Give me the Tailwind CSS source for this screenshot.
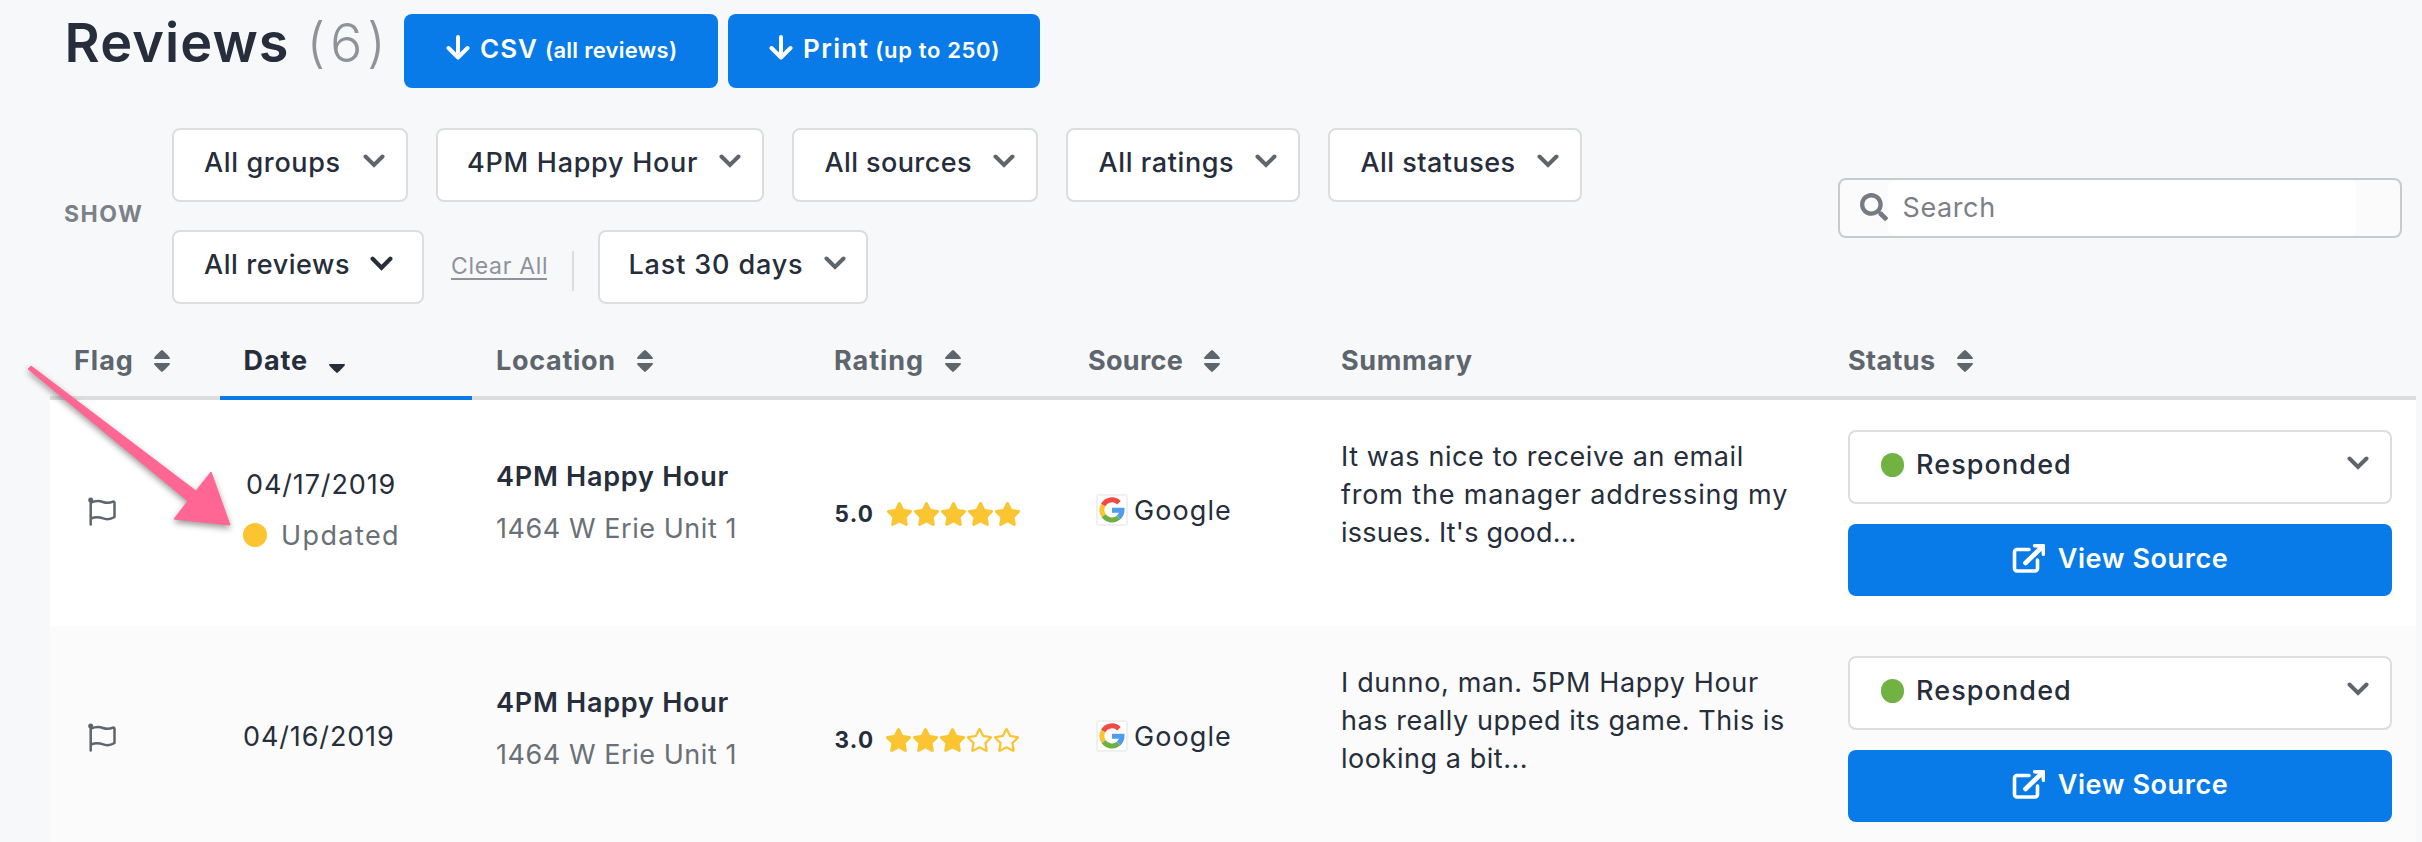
<!DOCTYPE html>
<html lang="en">
<head>
<meta charset="utf-8">
<title>Reviews</title>
<script src="https://cdn.jsdelivr.net/npm/@tailwindcss/browser@4"></script>
</head>
<body class="relative w-[2422px] h-[842px] overflow-hidden bg-[#f7f8fa] font-[Inter,sans-serif] text-[27px] text-[#262d3b] whitespace-nowrap">
<svg class="hidden">
  <symbol id="chev" viewBox="0 0 22 14"><path d="M2.5 2.5 11 11l8.500-8.500" fill="none" stroke="currentColor" stroke-width="4" stroke-linecap="round"/></symbol>
  <symbol id="down" viewBox="0 0 24 26"><path d="M12 2v20M2.500 13 12 22.500 21.500 13" fill="none" stroke="currentColor" stroke-width="4" stroke-linecap="round" stroke-linejoin="round"/></symbol>
  <symbol id="sort" viewBox="0 0 16 22"><path d="M8 0c.6 0 8 7 8 8.200 0 .5-.4.800-1 .8H1c-.6 0-1-.3-1-.8C0 7 7.400 0 8 0zM8 22c.6 0 8-7 8-8.200 0-.5-.4-.8-1-.8H1c-.6 0-1 .3-1 .8C0 15 7.400 22 8 22z" fill="currentColor"/></symbol>
  <symbol id="star" viewBox="0 0 576 512"><path fill="currentColor" d="M259.300 17.800L194 150.200 47.900 171.500c-26.200 3.800-36.700 36.100-17.700 54.600l105.700 103-25 145.500c-4.500 26.300 23.200 46 46.400 33.700L288 439.600l130.700 68.700c23.200 12.200 50.900-7.400 46.400-33.700l-25-145.500 105.700-103c19-18.500 8.500-50.800-17.700-54.600L382 150.200 316.700 17.800c-11.700-23.600-45.600-23.900-57.400 0z"/></symbol>
  <symbol id="star-o" viewBox="0 0 576 512"><path fill="currentColor" d="M528.100 171.500L382 150.200 316.700 17.800c-11.700-23.600-45.600-23.900-57.400 0L194 150.200 47.900 171.500c-26.200 3.800-36.700 36.100-17.700 54.600l105.700 103-25 145.500c-4.500 26.300 23.200 46 46.400 33.700L288 439.600l130.700 68.700c23.200 12.200 50.900-7.400 46.400-33.700l-25-145.500 105.700-103c19-18.500 8.500-50.800-17.700-54.600zM388.600 312.300l23.700 138.400L288 385.400l-124.300 65.300 23.700-138.400-100.600-98 139-20.200 62.200-126 62.200 126 139 20.200-100.600 98z"/></symbol>
  <symbol id="flag" viewBox="0 0 28 30"><circle cx="2.700" cy="3" r="2.500" fill="currentColor"/><path d="M2.700 3v24.500M3 5.500C8 3.500 11 3.500 15 5s7 1 10-.3c.8-.3 1.500 0 1.500 1V20c-4 2.500-8 2.800-12 1.200s-8-1.200-11.500.3" fill="none" stroke="currentColor" stroke-width="2.500" stroke-linecap="round" stroke-linejoin="round"/></symbol>
  <symbol id="ext" viewBox="0 0 34 30"><path d="M17 6.500H5A2.500 2.500 0 0 0 2.500 9v16.500A2.500 2.500 0 0 0 5 28h18a2.500 2.500 0 0 0 2.500-2.500V17" fill="none" stroke="currentColor" stroke-width="3.600" stroke-linecap="round"/><path d="M13.500 20 29 5" fill="none" stroke="currentColor" stroke-width="4.600" stroke-linecap="round"/><path d="M22.500 1H31.500C32.500 1 33 1.500 33 2.500V11.500C33 13.500 30 13.500 29.800 11.500L29 5 22.500 4.500C20.300 4 20.300 1 22.500 1z" fill="currentColor"/></symbol>
  <symbol id="google" viewBox="0 0 26 26"><g fill="none" stroke-width="5"><path d="M4.100 8.200A10 10 0 0 1 20 5.800" stroke="#ef4b43"/><path d="M4.700 18.600A10 10 0 0 1 4.100 8.200" stroke="#fbc531"/><path d="M19.500 20.600A10 10 0 0 1 4.700 18.600" stroke="#6fb043"/><path d="M13 13.200h10a10 10 0 0 1-3.500 7.400" stroke="#4f9cec"/></g></symbol>
</svg>

<header class="flex items-start h-[128px]">
  <h1 class="flex w-[404px] pl-[64.500px] text-[54px] leading-[86px] font-semibold tracking-[1.100px]">Reviews<span class="ml-[17px] font-light tracking-[4.500px] text-[#8f929a]">(6)</span></h1>
  <div class="flex gap-[10px] pt-[14px] text-white font-semibold">
    <a class="flex items-center w-[314px] h-[74px] pl-[42px] pb-[5px] rounded-lg bg-[#087be8]"><svg class="w-6 h-[26px] mr-[10px] mt-[-1px]"><use href="#down"/></svg><span class="text-[26px] tracking-[.97px]">CSV</span><small class="ml-[7px] mt-[3px] text-[22px] tracking-[.28px]">(all reviews)</small></a>
    <a class="flex items-center w-[312px] h-[74px] pl-[41px] pb-[5px] rounded-lg bg-[#087be8]"><svg class="w-6 h-[26px] mr-[10px] mt-[-1px]"><use href="#down"/></svg><span class="text-[26px] tracking-[1.400px]">Print</span><small class="ml-[6px] mt-[3px] text-[22px] tracking-[.65px]">(up to 250)</small></a>
  </div>
</header>

<section class="flex h-[176px]">
  <div class="flex items-center w-[172px] pl-16 pb-[3px] text-[23px] font-bold tracking-[1.530px] text-[#7b8188]">SHOW</div>
  <div class="flex flex-col gap-7 w-[1666px] font-medium">
    <div class="flex gap-7">
      <button class="flex items-center justify-between w-[236px] h-[74px] pl-[30px] pr-[21px] pb-[4px] rounded-lg border-2 border-[#dcdddf] bg-white tracking-[.63px]">All groups<svg class="w-[22px] h-[14px] mb-1 text-[#5d656d]"><use href="#chev"/></svg></button>
      <button class="flex items-center justify-between w-[328px] h-[74px] pl-[29px] pr-[21px] pb-[4px] rounded-lg border-2 border-[#dcdddf] bg-white tracking-[.73px]">4PM Happy Hour<svg class="w-[22px] h-[14px] mb-1 text-[#5d656d]"><use href="#chev"/></svg></button>
      <button class="flex items-center justify-between w-[246px] h-[74px] pl-[30.500px] pr-[21px] pb-[4px] rounded-lg border-2 border-[#dcdddf] bg-white tracking-[.4px]">All sources<svg class="w-[22px] h-[14px] mb-1 text-[#5d656d]"><use href="#chev"/></svg></button>
      <button class="flex items-center justify-between w-[234px] h-[74px] pl-[30.500px] pr-[21px] pb-[4px] rounded-lg border-2 border-[#dcdddf] bg-white tracking-[.6px]">All ratings<svg class="w-[22px] h-[14px] mb-1 text-[#5d656d]"><use href="#chev"/></svg></button>
      <button class="flex items-center justify-between w-[254px] h-[74px] pl-[30.500px] pr-[21px] pb-[4px] rounded-lg border-2 border-[#dcdddf] bg-white tracking-[.46px]">All statuses<svg class="w-[22px] h-[14px] mb-1 text-[#5d656d]"><use href="#chev"/></svg></button>
    </div>
    <div class="flex items-center">
      <button class="flex items-center justify-between w-[252px] h-[74px] pl-[30px] pr-[29px] pb-[4px] rounded-lg border-2 border-[#dcdddf] bg-white tracking-[.57px]">All reviews<svg class="w-[23px] h-[15px] mb-1 text-[#262d3b]"><use href="#chev"/></svg></button>
      <a class="ml-[27px] mt-[-3px] w-[96px] leading-[31px] text-[23px] font-normal tracking-[.7px] text-[#8f929a] border-b-2 border-[#8f929a] h-[29px]">Clear All</a>
      <i class="ml-[25px] mt-2 w-[2px] h-10 bg-[#dcdddf]"></i>
      <button class="flex items-center justify-between ml-[24px] w-[270px] h-[74px] pl-[28.500px] pr-[20px] pb-[4px] rounded-lg border-2 border-[#dcdddf] bg-white tracking-[.85px]">Last 30 days<svg class="w-[22px] h-[14px] mb-1 text-[#5d656d]"><use href="#chev"/></svg></button>
    </div>
  </div>
  <div class="flex mt-[50px] w-[564px] h-[60px] rounded-lg border-2 border-[#c9cacb] bg-[#fbfbfb]">
    <svg class="w-7 h-7 ml-5 mt-[13px] text-[#757b82]" viewBox="0 0 512 512"><path fill="currentColor" d="M505 442.700L405.300 343c-4.500-4.500-10.600-7-17-7H372c27.600-35.300 44-79.700 44-128C416 93.100 322.900 0 208 0S0 93.100 0 208s93.100 208 208 208c48.300 0 92.700-16.400 128-44v16.300c0 6.400 2.500 12.500 7 17l99.700 99.700c9.400 9.400 24.600 9.400 33.900 0l28.300-28.300c9.400-9.400 9.400-24.600.1-34zM208 336c-70.700 0-128-57.200-128-128 0-70.700 57.200-128 128-128 70.700 0 128 57.200 128 128 0 70.700-57.200 128-128 128z"/></svg>
    <div class="w-[468px] pl-[14.500px] leading-[56px] rounded-lg bg-white tracking-[.6px] text-[#7b8087]">Search</div>
  </div>
</section>

<main class="mt-5 ml-[50px] w-[2366px]">
  <div class="grid grid-cols-[170px_252px_338px_253px_253px_507px_593px] h-[76px] leading-[70px] font-bold text-[#5d656d] [&>div]:pt-[2px]">
    <div class="flex items-center pl-6 border-b-4 border-[#dcdddf] tracking-[1px]">Flag<svg class="w-4 h-[22px] ml-[20px]"><use href="#sort"/></svg></div>
    <div class="flex items-center pl-[23.500px] border-b-4 border-[#087be8] tracking-[.9px] text-[#262d3b]">Date<svg class="w-4 h-[9px] ml-[21px] mt-[14px]" viewBox="0 13 16 9"><path d="M8 22c.6 0 8-7 8-8.200 0-.5-.4-.8-1-.8H1c-.6 0-1 .3-1 .8C0 15 7.400 22 8 22z" fill="currentColor"/></svg></div>
    <div class="flex items-center pl-6 border-b-4 border-[#dcdddf] tracking-[.7px]">Location<svg class="w-4 h-[22px] ml-[21px]"><use href="#sort"/></svg></div>
    <div class="flex items-center pl-6 border-b-4 border-[#dcdddf] tracking-[.95px]">Rating<svg class="w-4 h-[22px] ml-[21px]"><use href="#sort"/></svg></div>
    <div class="flex items-center pl-[25px] border-b-4 border-[#dcdddf] tracking-[.3px]">Source<svg class="w-4 h-[22px] ml-[21px]"><use href="#sort"/></svg></div>
    <div class="flex items-center pl-[25px] border-b-4 border-[#dcdddf] tracking-[.65px]">Summary</div>
    <div class="flex items-center pl-[25px] border-b-4 border-[#dcdddf] tracking-[.4px]">Status<svg class="w-4 h-[22px] ml-[21px]"><use href="#sort"/></svg></div>
  </div>

  <div class="grid grid-cols-[170px_252px_338px_253px_253px_507px_593px] h-[226px] bg-white">
    <div class="pt-[97px] pl-[37.500px] text-[#5d656d]"><svg class="w-7 h-[30px]"><use href="#flag"/></svg></div>
    <div class="pt-[59px] pl-[23px] leading-[51px]">
      <div class="pl-[3px] tracking-[.87px]">04/17/2019</div>
      <div class="flex items-center h-[50px] tracking-[1.400px] text-[#6a7077]"><i class="w-6 h-6 mr-[14px] rounded-full bg-[#fbc531]"></i>Updated</div>
    </div>
    <div class="pt-[51px] pl-6 leading-[52px]">
      <div class="font-semibold tracking-[.75px]">4PM Happy Hour</div>
      <div class="tracking-[.55px] text-[#6a7077]">1464 W Erie Unit 1</div>
    </div>
    <div class="flex items-center h-[38px] mt-[95px] pl-[24.500px]"><b class="w-[51px] text-[22.500px] tracking-[1.300px]">5.0</b><span class="flex text-[#fbc531]"><svg class="w-[27px] h-6"><use href="#star"/></svg><svg class="w-[27px] h-6"><use href="#star"/></svg><svg class="w-[27px] h-6"><use href="#star"/></svg><svg class="w-[27px] h-6"><use href="#star"/></svg><svg class="w-[27px] h-6"><use href="#star"/></svg></span></div>
    <div class="flex items-center h-8 mt-[94px] pl-[33px] tracking-[1.080px]"><span class="flex items-center justify-center w-8 h-8 mr-[6px] rounded-[3px] border-2 border-[#f0f0f1] bg-white"><svg class="w-[26px] h-[26px]"><use href="#google"/></svg></span><span class="pt-[2px]">Google</span></div>
    <div class="pt-[38px] pl-[25px] leading-[38px]">
      <div class="tracking-[.6px]">It was nice to receive an email</div>
      <div class="tracking-[.82px]">from the manager addressing my</div>
      <div class="tracking-[.2px]">issues. It's good...</div>
    </div>
    <div class="flex flex-col gap-5 w-[569px] pt-[30px] pl-[25px]">
      <button class="flex items-center h-[74px] pl-[31px] pr-[21px] pb-[4px] rounded-lg border-2 border-[#dcdddf] bg-white font-medium tracking-[1.100px]"><i class="w-[23px] h-6 mr-[12px] rounded-full bg-[#72b243]"></i>Responded<svg class="w-[22px] h-[14px] mb-1 ml-auto text-[#5d656d]"><use href="#chev"/></svg></button>
      <a class="flex items-center justify-center h-[72px] pb-[2px] rounded-lg bg-[#087be8] text-white font-semibold tracking-[.59px]"><svg class="w-[34px] h-[30px] mr-[12px] mb-[3px]"><use href="#ext"/></svg>View Source</a>
    </div>
  </div>

  <div class="grid grid-cols-[170px_252px_338px_253px_253px_507px_593px] h-[226px] bg-[#fbfbfb]">
    <div class="pt-[97px] pl-[37.500px] text-[#5d656d]"><svg class="w-7 h-[30px]"><use href="#flag"/></svg></div>
    <div class="pt-[85px] pl-[23px] leading-[52px] tracking-[.87px]">04/16/2019</div>
    <div class="pt-[51px] pl-6 leading-[52px]">
      <div class="font-semibold tracking-[.75px]">4PM Happy Hour</div>
      <div class="tracking-[.55px] text-[#6a7077]">1464 W Erie Unit 1</div>
    </div>
    <div class="flex items-center h-[38px] mt-[95px] pl-[24.500px]"><b class="w-[50px] text-[22.500px] tracking-[1.300px]">3.0</b><span class="flex text-[#fbc531]"><svg class="w-[27px] h-6"><use href="#star"/></svg><svg class="w-[27px] h-6"><use href="#star"/></svg><svg class="w-[27px] h-6"><use href="#star"/></svg><svg class="w-[27px] h-6"><use href="#star-o"/></svg><svg class="w-[27px] h-6"><use href="#star-o"/></svg></span></div>
    <div class="flex items-center h-8 mt-[94px] pl-[33px] tracking-[1.080px]"><span class="flex items-center justify-center w-8 h-8 mr-[6px] rounded-[3px] border-2 border-[#f0f0f1] bg-white"><svg class="w-[26px] h-[26px]"><use href="#google"/></svg></span><span class="pt-[2px]">Google</span></div>
    <div class="pt-[38px] pl-[25px] leading-[38px]">
      <div class="tracking-[.65px]">I dunno, man. 5PM Happy Hour</div>
      <div class="tracking-[.56px]">has really upped its game. This is</div>
      <div class="tracking-[.55px]">looking a bit...</div>
    </div>
    <div class="flex flex-col gap-5 w-[569px] pt-[30px] pl-[25px]">
      <button class="flex items-center h-[74px] pl-[31px] pr-[21px] pb-[4px] rounded-lg border-2 border-[#dcdddf] bg-white font-medium tracking-[1.100px]"><i class="w-[23px] h-6 mr-[12px] rounded-full bg-[#72b243]"></i>Responded<svg class="w-[22px] h-[14px] mb-1 ml-auto text-[#5d656d]"><use href="#chev"/></svg></button>
      <a class="flex items-center justify-center h-[72px] pb-[2px] rounded-lg bg-[#087be8] text-white font-semibold tracking-[.59px]"><svg class="w-[34px] h-[30px] mr-[12px] mb-[3px]"><use href="#ext"/></svg>View Source</a>
    </div>
  </div>
</main>

<!-- Callout arrow pointing at the "Updated" marker -->
<svg class="absolute left-0 top-[340px] w-[260px] h-[210px] drop-shadow-[0_3px_3px_rgba(0,0,0,.4)]" viewBox="0 340 260 210"><path d="M28 369 31 366 196 491 211 472 230 525 174 519 188 501z" fill="#ff6694" stroke="#ff6694" stroke-width="1" stroke-linejoin="round"/></svg>
</body>
</html>
